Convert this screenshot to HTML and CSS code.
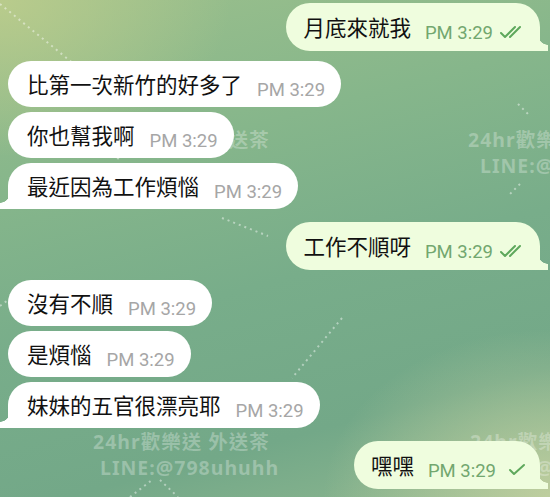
FILE: index.html
```html
<!DOCTYPE html>
<html lang="zh-Hant">
<head>
  <meta charset="UTF-8" />
  <meta name="viewport" content="width=device-width, initial-scale=1.0">
  <title>Chat</title>
  <link rel="stylesheet" href="styles.css">
</head>
<body>

<!-- fond : filigrane + pointillés -->
<div class="backdrop">
  <svg class="dots" width="550" height="497" viewBox="0 0 550 497">
    <path d="M0 4 L74 64" />
    <path d="M108 150 L120 160" />
    <path d="M222 218 L268 236" />
    <path d="M0 306 L16 294" />
    <path d="M342 318 L292 378" />
    <path d="M518 104 L528 114" />
    <path d="M520 184 L508 196" />
    <path d="M130 497 L152 480" />
    <path d="M160 480 L178 497" />
  </svg>
  <div class="wm" style="left:93px;top:124px">24hr歡樂送 外送茶</div>
  <div class="wm" style="left:468px;top:124px">24hr歡樂送 外送茶</div>
  <div class="wm" style="left:480px;top:152px">LINE:@798uhuhh</div>
  <div class="wm" style="left:93px;top:426px">24hr歡樂送 外送茶</div>
  <div class="wm" style="left:100px;top:454px">LINE:@798uhuhh</div>
  <div class="wm" style="left:470px;top:426px">24hr歡樂送 外送茶</div>
  <div class="wm" style="left:480px;top:454px">LINE:@798uhuhh</div>
</div>

<div class="chat">

  <div class="row out">
    <div class="bubble tail">
      <span class="text">月底來就我</span>
      <span class="meta">PM 3:29
        <svg class="check" width="28" height="14" viewBox="0 0 28 14"><path d="M2 8l4 4 10-10M11 12l10-10" /></svg>
      </span>
    </div>
  </div>

  <div class="row in first">
    <div class="bubble">
      <span class="text">比第一次新竹的好多了</span>
      <span class="meta">PM 3:29</span>
    </div>
  </div>
  <div class="row in">
    <div class="bubble">
      <span class="text">你也幫我啊</span>
      <span class="meta">PM 3:29</span>
    </div>
  </div>
  <div class="row in">
    <div class="bubble tail">
      <span class="text">最近因為工作煩惱</span>
      <span class="meta">PM 3:29</span>
    </div>
  </div>

  <div class="row out">
    <div class="bubble tail">
      <span class="text">工作不順呀</span>
      <span class="meta">PM 3:29
        <svg class="check" width="28" height="14" viewBox="0 0 28 14"><path d="M2 8l4 4 10-10M11 12l10-10" /></svg>
      </span>
    </div>
  </div>

  <div class="row in first">
    <div class="bubble">
      <span class="text">沒有不順</span>
      <span class="meta">PM 3:29</span>
    </div>
  </div>
  <div class="row in">
    <div class="bubble">
      <span class="text">是煩惱</span>
      <span class="meta">PM 3:29</span>
    </div>
  </div>
  <div class="row in">
    <div class="bubble tail">
      <span class="text">妹妹的五官很漂亮耶</span>
      <span class="meta">PM 3:29</span>
    </div>
  </div>

  <div class="row out">
    <div class="bubble tail">
      <span class="text">嘿嘿</span>
      <span class="meta single">PM 3:29
        <svg class="check" width="20" height="14" viewBox="0 0 20 14"><path d="M3 7l4 4 10-9" /></svg>
      </span>
    </div>
  </div>

</div>

</body>
</html>
```

FILE: styles.css
```css
html, body {
  margin: 0;
  padding: 0;
  height: 100%;
  overflow: hidden;
}

body {
  position: relative;
  font-family: "Noto Sans CJK TC", "Noto Sans", sans-serif;
  color: #111;
  background:
    radial-gradient(ellipse 60% 45% at 0% 0%, rgba(192, 206, 140, 0.8), transparent 70%),
    radial-gradient(ellipse 55% 45% at 100% 100%, rgba(195, 208, 160, 0.9), transparent 75%),
    linear-gradient(165deg, #9cc08c 0%, #86b68b 30%, #78ad8a 55%, #73a888 80%, #8fb890 100%);
}

.backdrop {
  position: absolute;
  inset: 0;
  z-index: 0;
}

.dots {
  position: absolute;
  left: 0;
  top: 0;
}

.dots path {
  stroke: rgba(255, 255, 255, 0.45);
  stroke-width: 2;
  stroke-dasharray: 2 4;
  fill: none;
}

.wm {
  position: absolute;
  white-space: nowrap;
  font-family: "Noto Sans", "Noto Sans CJK TC", sans-serif;
  font-size: 19.5px;
  font-weight: bold;
  letter-spacing: 1px;
  color: rgba(255, 255, 255, 0.28);
}

.chat {
  position: relative;
  z-index: 1;
  display: flex;
  flex-direction: column;
  padding: 3px 10px 0 8px;
}

.row {
  display: flex;
  margin-top: 5px;
}

.row.in.first {
  margin-top: 10px;
}

.row.out {
  justify-content: flex-end;
  margin-top: 13px;
}

.row.out:first-child {
  margin-top: 0;
}

.bubble {
  position: relative;
  display: flex;
  align-items: center;
  box-sizing: border-box;
  height: 46px;
  padding: 0 16px 0 19px;
  border-radius: 23px;
  background: #ffffff;
}

.row.out .bubble {
  height: 48px;
  padding: 0 13px 0 17px;
  border-radius: 24px;
  background: #effdde;
}

.text {
  font-size: 21.5px;
  line-height: 26px;
  color: #111;
}

.meta {
  display: flex;
  align-items: center;
  gap: 6px;
  margin-left: 15px;
  padding-top: 11px;
  font-family: Roboto, "Noto Sans", sans-serif;
  font-size: 18.5px;
  color: #a6a6a6;
}

.row.out .meta {
  margin-left: 14px;
  color: #72a76f;
}

.row.out .meta.single {
  gap: 11px;
}

.check {
  margin-bottom: 2px;
}

.check path {
  stroke: #5ea85c;
  stroke-width: 2;
  fill: none;
  stroke-linecap: round;
  stroke-linejoin: round;
}

/* queue de bulle */
.bubble.tail::after {
  content: "";
  position: absolute;
  bottom: 0;
  width: 10px;
  height: 16px;
}

.row.in .bubble.tail {
  border-bottom-left-radius: 0;
}

.row.in .bubble.tail::after {
  left: -8px;
  background: radial-gradient(circle at 0 0, transparent 9.5px, #ffffff 10px);
}

.row.out .bubble.tail {
  border-bottom-right-radius: 0;
}

.row.out .bubble.tail::after {
  right: -8px;
  background: radial-gradient(circle at 100% 0, transparent 9.5px, #effdde 10px);
}
```
